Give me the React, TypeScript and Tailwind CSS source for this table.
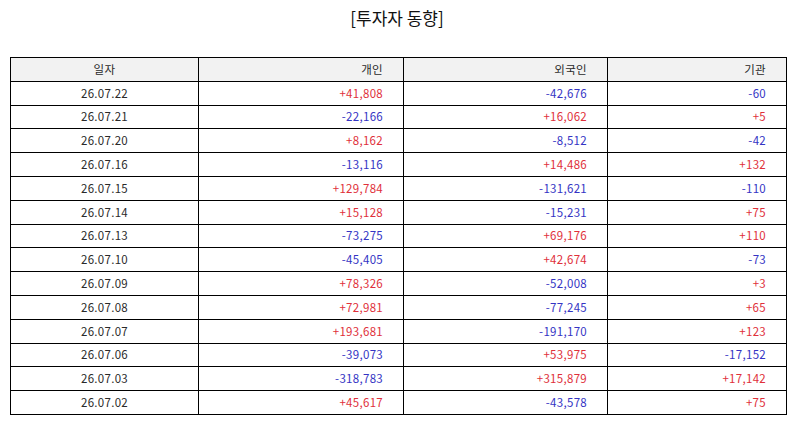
const rows: [string, number, number, number][] = [
  ['26.07.22', 41808, -42676, -60],
  ['26.07.21', -22166, 16062, 5],
  ['26.07.20', 8162, -8512, -42],
  ['26.07.16', -13116, 14486, 132],
  ['26.07.15', 129784, -131621, -110],
  ['26.07.14', 15128, -15231, 75],
  ['26.07.13', -73275, 69176, 110],
  ['26.07.10', -45405, 42674, -73],
  ['26.07.09', 78326, -52008, 3],
  ['26.07.08', 72981, -77245, 65],
  ['26.07.07', 193681, -191170, 123],
  ['26.07.06', -39073, 53975, -17152],
  ['26.07.03', -318783, 315879, 17142],
  ['26.07.02', 45617, -43578, 75],
];

function fmt(n: number) {
  return (n > 0 ? '+' : '') + n.toLocaleString('en-US');
}

function Num({ v }: { v: number }) {
  return (
    <td className={`border border-black pr-5 text-right ${v > 0 ? 'text-[#e0303a]' : 'text-[#3434c4]'}`}>
      {fmt(v)}
    </td>
  );
}

export default function App() {
  return (
    <div
      className="w-[794px] h-[425px] bg-white px-[10px] pt-[5px]"
      style={{ fontFamily: '"Noto Sans CJK KR", "Noto Sans", sans-serif' }}
    >
      <h1 className="text-center text-[17px] leading-[26px] text-[#111]">[투자자 동향]</h1>
      <table className="mt-[26px] w-[776px] table-fixed border-collapse border border-black text-[11.5px] tracking-[0.3px] text-[#2a2a2a]">
        <colgroup>
          <col className="w-[188px]" />
          <col className="w-[205px]" />
          <col className="w-[204px]" />
          <col className="w-[179px]" />
        </colgroup>
        <thead>
          <tr className="h-[23.8px] bg-[#f2f2f2]">
            <th className="border border-black font-normal text-center">일자</th>
            <th className="border border-black font-normal text-right pr-5">개인</th>
            <th className="border border-black font-normal text-right pr-5">외국인</th>
            <th className="border border-black font-normal text-right pr-5">기관</th>
          </tr>
        </thead>
        <tbody>
          {rows.map(([d, a, b, c]) => (
            <tr key={d} className="h-[23.8px]">
              <td className="border border-black text-center">{d}</td>
              <Num v={a} />
              <Num v={b} />
              <Num v={c} />
            </tr>
          ))}
        </tbody>
      </table>
    </div>
  );
}
